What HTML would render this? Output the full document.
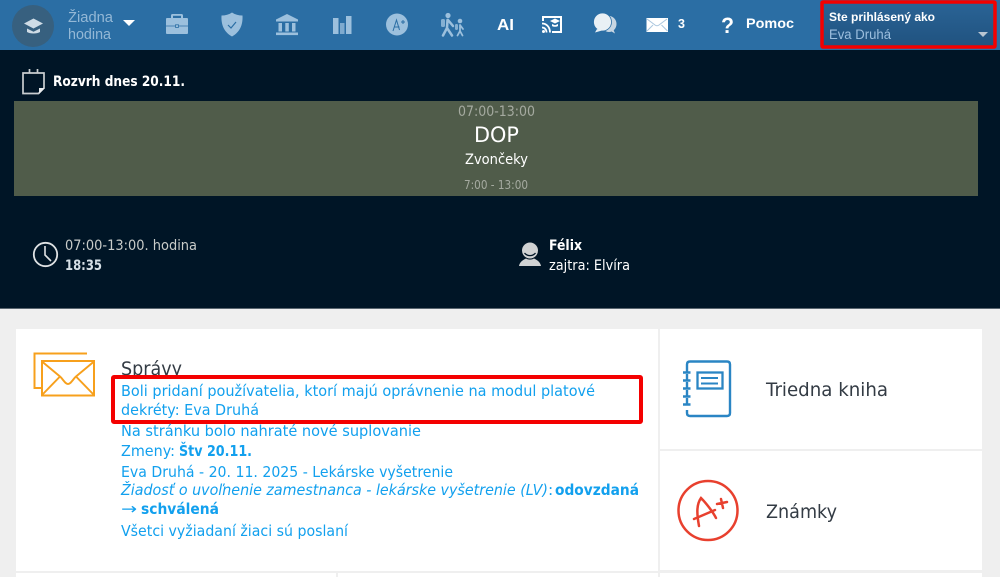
<!DOCTYPE html>
<html lang="sk">
<head>
<meta charset="utf-8">
<title>Rozvrh</title>
<style>
html,body{margin:0;padding:0;width:1000px;height:577px;overflow:hidden;background:#efefef}
svg{display:block}
text{font-family:"DejaVu Sans","Liberation Sans",sans-serif}
.ar{font-family:"Liberation Sans",Arial,sans-serif}
.lnk{fill:#12a0ee;font-size:15.500px}
</style>
</head>
<body>
<svg width="1000" height="577" viewBox="0 0 1000 577" xmlns="http://www.w3.org/2000/svg">
<defs>
<linearGradient id="u" x1="0" y1="0" x2="0" y2="1"><stop offset="0" stop-color="#2a6496"/><stop offset="1" stop-color="#20527f"/></linearGradient>
</defs>
<!-- backgrounds -->
<rect width="1000" height="50" fill="#2b6ea4"/>
<rect y="50" width="1000" height="259" fill="#001526"/>
<rect y="308" width="1000" height="1" fill="#5a6670"/>
<rect y="309" width="1000" height="268" fill="#efefef"/>
<rect x="16" y="329" width="642" height="242" fill="#fff"/>
<rect x="660" y="329" width="322" height="120" fill="#fff"/>
<rect x="660" y="451" width="322" height="119" fill="#fff"/>
<rect x="16" y="573" width="320" height="4" fill="#fff"/>
<rect x="338" y="573" width="320" height="4" fill="#fff"/>
<rect x="660" y="573" width="322" height="4" fill="#fff"/>

<!-- header -->
<circle cx="33" cy="26" r="21" fill="#37607f"/>
<path d="M33.500 18.500l9.500 5-9.500 5-9.500-5z" fill="#cfdce6"/>
<path d="M27 28.500v3.500c3 2 10 2 13 0v-3.500l-6.500 3.300z" fill="#cfdce6"/>
<text class="ar" x="68" y="22" font-size="14.500" fill="#94b8d6" textLength="45" lengthAdjust="spacingAndGlyphs">Žiadna</text>
<text class="ar" x="68" y="39" font-size="14.500" fill="#94b8d6" textLength="43" lengthAdjust="spacingAndGlyphs">hodina</text>
<path d="M123 20h12l-6 6z" fill="#fff"/>

<!-- briefcase -->
<path d="M171 18v-2.500c0-.9.6-1.500 1.500-1.500h9c.9 0 1.500.6 1.500 1.500V18h4c.6 0 1 .4 1 1v14c0 .6-.4 1-1 1h-20c-.6 0-1-.4-1-1V19c0-.6.4-1 1-1z" fill="#9cc0dd"/>
<rect x="173" y="15.800" width="8" height="2.200" fill="#2b6ea4"/>
<path d="M166 26h9.500M178.500 26h9.500" stroke="#2b6ea4" stroke-width=".8"/>
<rect x="175.500" y="24.800" width="3" height="2.600" fill="none" stroke="#2b6ea4" stroke-width=".8"/>
<!-- shield -->
<path d="M232 12.500c3 2 6.500 3 10.500 3 .5 9.500-2.500 16.500-10.500 21-8-4.500-11-11.500-10.500-21 4 0 7.500-1 10.500-3z" fill="#9cc0dd"/>
<path d="M228 25l3 3 5-6" fill="none" stroke="#2b6ea4" stroke-width="1.200"/>
<!-- bank -->
<path d="M287 14l11 5.500v2h-22v-2z" fill="#9cc0dd"/>
<path d="M278.500 23h3.500v8.500h-3.500zM285.300 23h3.500v8.500h-3.500zM292 23h3.500v8.500H292z" fill="#9cc0dd"/>
<rect x="276" y="32.500" width="22" height="2.600" fill="#9cc0dd"/>
<!-- bars -->
<rect x="333" y="18" width="5.500" height="16" fill="#9cc0dd"/>
<rect x="340" y="23" width="4.500" height="11" fill="#9cc0dd" opacity=".75"/>
<rect x="346" y="16" width="5.500" height="18" fill="#9cc0dd"/>
<!-- grade -->
<circle cx="397" cy="24.500" r="11" fill="#9cc0dd"/>
<path d="M393 31l3.500-11 3 10M394 27h5.500M401 22h4M403 20v4" fill="none" stroke="#2b6ea4" stroke-width="1"/>
<!-- walkers -->
<g fill="none" stroke="#9cc0dd" stroke-linecap="round">
<path d="M447.500 20l-.5 8-4 7.500M447 28l5 7.500M448 20l5 6" stroke-width="2.500"/>
<path d="M460 25l0 6-2.500 4.500M460 31l2.500 4.500M460 25l3 4" stroke-width="1.800"/>
</g>
<circle cx="448" cy="15.500" r="2.600" fill="#9cc0dd"/>
<circle cx="460" cy="21" r="2.300" fill="#9cc0dd"/>
<rect x="441" y="19" width="4" height="8" rx="1.500" fill="#9cc0dd" opacity=".8"/>
<rect x="455" y="24" width="3" height="6" rx="1.200" fill="#9cc0dd" opacity=".8"/>
<text class="ar" x="497" y="30" font-size="16" font-weight="700" fill="#fff" textLength="17" lengthAdjust="spacingAndGlyphs">AI</text>
<!-- cast -->
<path d="M543 21v-4h18v15h-9" fill="none" stroke="#fff" stroke-width="2"/>
<path d="M542 23.500c4.500 0 8 3.500 8 9M542 27.500c2.500 0 4.500 2 4.500 5" fill="none" stroke="#fff" stroke-width="1.800"/>
<circle cx="543.500" cy="31.500" r="1.500" fill="#fff"/>
<path d="M555 18.500l5 2.500-5 2.500-5-2.500z" fill="#fff"/>
<path d="M552 24v2c1.500 1 4.500 1 6 0v-2l-3 1.300z" fill="#fff"/>
<!-- chat -->
<ellipse cx="609" cy="24" rx="7.500" ry="8" fill="#c7d6e3"/>
<path d="M609 30l6 3.500-2-5z" fill="#c7d6e3"/>
<ellipse cx="602.500" cy="22" rx="9" ry="9" fill="#e9f0f5" stroke="#2b6ea4" stroke-width=".8"/>
<path d="M597 29l-2 3.500 7-2z" fill="#e9f0f5"/>
<!-- mail -->
<rect x="646.500" y="18" width="21.500" height="14" fill="#fff"/>
<path d="M647 19l8 6c1.400 1 2.600 1 4 0l8-6M647 31l6-6M667.500 31l-6-6" fill="none" stroke="#a9c6de" stroke-width="1"/>
<text class="ar" x="678" y="28" font-size="12.500" font-weight="700" fill="#fff">3</text>
<text class="ar" x="721" y="33" font-size="22" font-weight="700" fill="#fff" textLength="13" lengthAdjust="spacingAndGlyphs">?</text>
<text class="ar" x="746" y="28" font-size="14" font-weight="700" fill="#fff" textLength="48" lengthAdjust="spacingAndGlyphs">Pomoc</text>

<!-- user box -->
<rect x="822" y="2" width="173" height="45" fill="url(#u)"/>
<rect x="822" y="2" width="173" height="45" fill="none" stroke="#f40000" stroke-width="3.500" rx="1"/>
<text class="ar" x="829" y="21" font-size="12" font-weight="700" fill="#fff" textLength="106" lengthAdjust="spacingAndGlyphs">Ste prihlásený ako</text>
<text class="ar" x="829" y="39" font-size="13.500" fill="#9dbfdf" textLength="62" lengthAdjust="spacingAndGlyphs">Eva Druhá</text>
<path d="M978 32h10l-5 5z" fill="#b9c6d2"/>

<!-- schedule -->
<path d="M23 73h21v15l-5.500 5.500H23z" fill="none" stroke="#c9cdd0" stroke-width="1.700"/>
<path d="M29.500 69v4M37.500 69v4" stroke="#c9cdd0" stroke-width="1.700"/>
<path d="M39 94v-6h6z" fill="#e8eaec"/>
<text x="53" y="86" font-size="14.500" font-weight="700" fill="#fff" textLength="132" lengthAdjust="spacingAndGlyphs">Rozvrh dnes 20.11.</text>

<rect x="14" y="101" width="964" height="95" fill="#505c4a"/>
<text x="458" y="116" font-size="14.500" fill="#a5aaa0" textLength="77" lengthAdjust="spacingAndGlyphs">07:00-13:00</text>
<text x="474" y="142" font-size="21" fill="#fff" textLength="45" lengthAdjust="spacingAndGlyphs">DOP</text>
<text x="465" y="164" font-size="14.500" fill="#fff" textLength="63" lengthAdjust="spacingAndGlyphs">Zvončeky</text>
<text x="464" y="189" font-size="12.500" fill="#a5aaa0" textLength="64" lengthAdjust="spacingAndGlyphs">7:00 - 13:00</text>

<!-- clock -->
<circle cx="45.500" cy="254.500" r="11.700" fill="none" stroke="#dfe2e4" stroke-width="1.800"/>
<path d="M45 246v9l6 6" fill="none" stroke="#dfe2e4" stroke-width="1.600"/>
<text x="65" y="250" font-size="14.500" fill="#c9ccc9" textLength="132" lengthAdjust="spacingAndGlyphs">07:00-13:00. hodina</text>
<text x="65" y="270" font-size="14.500" font-weight="700" fill="#d5dfe6" textLength="37" lengthAdjust="spacingAndGlyphs">18:35</text>

<!-- person -->
<ellipse cx="530" cy="250.500" rx="8" ry="8" fill="#d0d2d3"/>
<path d="M524.500 253c3 3.500 8 3.500 11 0" fill="none" stroke="#001526" stroke-width="1.300"/>
<path d="M519 266c.5-3.500 3.500-6 7-7.500 2.500 1.500 5.500 1.500 8 0 3.500 1.500 6.500 4 7 7.500z" fill="#d0d2d3"/>
<text x="549" y="250" font-size="14.500" font-weight="700" fill="#fff" textLength="33" lengthAdjust="spacingAndGlyphs">Félix</text>
<text x="549" y="270" font-size="14.500" fill="#fff" textLength="81" lengthAdjust="spacingAndGlyphs">zajtra: Elvíra</text>

<!-- messages card -->
<path d="M87 353.500H34.500v34.500h7" fill="none" stroke="#f7a01c" stroke-width="2"/>
<rect x="42" y="361" width="52" height="34.500" fill="#fff" stroke="#f7a01c" stroke-width="2"/>
<path d="M42 361.500l18 15c3 2.500 5 7.500 8 7.500s5-5 8-7.500l18-15M42 395l18-18.500M94 395l-18-18.500" fill="none" stroke="#f7a01c" stroke-width="1.900"/>

<text x="121" y="375" font-size="19" fill="#333b44" textLength="61" lengthAdjust="spacingAndGlyphs">Správy</text>
<!-- red highlight -->
<rect x="113" y="377" width="528" height="45" fill="#fff" stroke="#f40000" stroke-width="4" rx="1"/>

<text class="lnk" x="121" y="396" textLength="474" lengthAdjust="spacingAndGlyphs">Boli pridaní používatelia, ktorí majú oprávnenie na modul platové</text>
<text class="lnk" x="121" y="415" textLength="138" lengthAdjust="spacingAndGlyphs">dekréty: Eva Druhá</text>
<text class="lnk" x="121" y="436" textLength="300" lengthAdjust="spacingAndGlyphs">Na stránku bolo nahraté nové suplovanie</text>
<text class="lnk" x="121" y="456" textLength="54" lengthAdjust="spacingAndGlyphs">Zmeny:</text>
<text class="lnk" x="179" y="456" font-weight="700" textLength="73" lengthAdjust="spacingAndGlyphs">Štv 20.11.</text>
<text class="lnk" x="121" y="477" textLength="332" lengthAdjust="spacingAndGlyphs">Eva Druhá - 20. 11. 2025 - Lekárske vyšetrenie</text>
<text class="lnk" x="121" y="495" font-style="italic" textLength="427" lengthAdjust="spacingAndGlyphs">Žiadosť o uvoľnenie zamestnanca - lekárske vyšetrenie (LV)</text>
<text class="lnk" x="548" y="495">:</text>
<text class="lnk" x="555" y="495" font-weight="700" textLength="84" lengthAdjust="spacingAndGlyphs">odovzdaná</text>
<text class="lnk" x="121" y="514" textLength="16" lengthAdjust="spacingAndGlyphs">→</text>
<text class="lnk" x="141" y="514" font-weight="700" textLength="78" lengthAdjust="spacingAndGlyphs">schválená</text>
<text class="lnk" x="121" y="536" textLength="227" lengthAdjust="spacingAndGlyphs">Všetci vyžiadaní žiaci sú poslaní</text>

<!-- notebook icon -->
<path d="M687 366v-1.500c0-2 1-3 3-3h37c2 0 3 1 3 3v48.500c0 2-1 3-3 3h-37c-2 0-3-1-3-3v-3" fill="none" stroke="#2a85c4" stroke-width="2.400"/>
<path d="M687 366v40" stroke="#2a85c4" stroke-width="2.400" stroke-dasharray="7 1"/>
<path d="M683 372.500h7.500M683 380.500h7.500M683 388.500h7.500M683 396.500h7.500M683 404.500h7.500" stroke="#2a85c4" stroke-width="2.400"/>
<rect x="697.500" y="372.500" width="25" height="16" fill="none" stroke="#2a85c4" stroke-width="2.300"/>
<path d="M701 378h17M701 383.500h17" stroke="#2a85c4" stroke-width="2"/>
<text x="766" y="396" font-size="19" fill="#333b44" textLength="122" lengthAdjust="spacingAndGlyphs">Triedna kniha</text>

<!-- grade icon -->
<circle cx="708" cy="510.500" r="29.500" fill="none" stroke="#e8402e" stroke-width="2.500"/>
<path d="M699 526C697 515 696 505 701 498C706 503 713 512 716 518M694 519L715 510M717 504l10-2M721 499l2 9" fill="none" stroke="#e8402e" stroke-width="2.500" stroke-linecap="round"/>
<text x="766" y="518" font-size="19" fill="#333b44" textLength="71" lengthAdjust="spacingAndGlyphs">Známky</text>
</svg>
</body>
</html>
